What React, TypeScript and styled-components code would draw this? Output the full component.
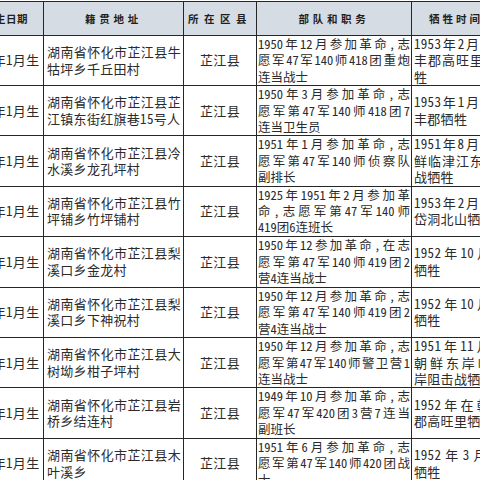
import styled, { createGlobalStyle } from 'styled-components';

type Row = {
  h: number;
  born: string;
  addr: string[];
  unit: string[];
  death: string[];
};

const rows: Row[] = [
  {
    h: 50,
    born: '1930年1月生',
    addr: ['湖南省怀化市芷江县牛', '牯坪乡千丘田村'],
    unit: ['1950年12月参加革命，志', '愿军47军140师418团重炮', '连当战士'],
    death: ['1953年2月在朝鲜金', '丰郡高旺里战斗中牺', '牲'],
  },
  {
    h: 49,
    born: '1931年1月生',
    addr: ['湖南省怀化市芷江县芷', '江镇东街红旗巷15号人'],
    unit: ['1950年3月参加革命，志', '愿军第47军140师418团7', '连当卫生员'],
    death: ['1953年1月在朝鲜金', '丰郡牺牲'],
  },
  {
    h: 49,
    born: '1930年1月生',
    addr: ['湖南省怀化市芷江县冷', '水溪乡龙孔坪村'],
    unit: ['1951年1月参加革命，志', '愿军第47军140师侦察队', '副排长'],
    death: ['1951年8月31日在朝', '鲜临津江东岸阻击作', '战牺牲'],
  },
  {
    h: 49,
    born: '1925年1月生',
    addr: ['湖南省怀化市芷江县竹', '坪铺乡竹坪铺村'],
    unit: ['1925年1951年2月参加革', '命，志愿军第47军140师', '419团6连班长'],
    death: ['1953年2月在朝鲜金', '岱洞北山牺牲'],
  },
  {
    h: 51,
    born: '1929年1月生',
    addr: ['湖南省怀化市芷江县梨', '溪口乡金龙村'],
    unit: ['1950年12参加革命，在志', '愿军第47军140师419团2', '营4连当战士'],
    death: ['1952年10月在朝鲜', '牺牲'],
  },
  {
    h: 49,
    born: '1931年1月生',
    addr: ['湖南省怀化市芷江县梨', '溪口乡下神祝村'],
    unit: ['1950年12月参加革命，志', '愿军第47军140师419团2', '营4连当战士'],
    death: ['1952年10月在朝鲜', '牺牲'],
  },
  {
    h: 49,
    born: '1932年1月生',
    addr: ['湖南省怀化市芷江县大', '树坳乡柑子坪村'],
    unit: ['1950年12月参加革命，志', '愿军第47军140师警卫营1', '连当战士'],
    death: ['1951年11月22日在', '朝鲜东岸临津江东', '岸阻击战牺牲'],
  },
  {
    h: 49,
    born: '1928年1月生',
    addr: ['湖南省怀化市芷江县岩', '桥乡结连村'],
    unit: ['1949年10月参加革命，志', '愿军47军420团3营7连当', '副班长'],
    death: ['1952年在朝鲜金丰', '郡高旺里牺牲'],
  },
  {
    h: 51,
    born: '1930年1月生',
    addr: ['湖南省怀化市芷江县木', '叶溪乡'],
    unit: ['1951年6月参加革命，志', '愿军第47军140师420团战', '士'],
    death: ['1952年3月在朝鲜', '牺牲'],
  },
];

// every line but the last is spread to the full cell width, as in the sheet
function Lines({ lines }: { lines: string[] }) {
  return (
    <>
      {lines.map((line, i) => (
        <Line key={i} $justify={i < lines.length - 1}>
          {line}
        </Line>
      ))}
    </>
  );
}

function App() {
  return (
    <Page>
      <GlobalStyle />
      <Table>
        <colgroup>
          <col style={{ width: 82 }} />
          <col style={{ width: 140 }} />
          <col style={{ width: 73 }} />
          <col style={{ width: 155 }} />
          <col style={{ width: 130 }} />
        </colgroup>
        <thead>
          <tr>
            <HeadCell $spacing={0.5} $align="right" $pad="0 15px 0 0">
              出生日期
            </HeadCell>
            <HeadCell $spacing={3.8}>籍贯地址</HeadCell>
            <HeadCell $spacing={5.5}>所在区县</HeadCell>
            <HeadCell $spacing={3.7}>部队和职务</HeadCell>
            <HeadCell $spacing={3} $align="left" $pad="0 0 0 17px">
              牺牲时间
            </HeadCell>
          </tr>
        </thead>
        <tbody>
          {rows.map((row, i) => (
            <tr key={i}>
              <Cell $h={row.h} $align="center">
                {row.born}
              </Cell>
              <Cell $h={row.h} $pad="0 2px 0 3px">
                <Lines lines={row.addr} />
              </Cell>
              <Cell $h={row.h} $align="center">
                芷江县
              </Cell>
              <Cell $h={row.h} $pad="0 1px" $tight>
                <Lines lines={row.unit} />
              </Cell>
              <Cell $h={row.h} $pad="0 2px">
                <Lines lines={row.death} />
              </Cell>
            </tr>
          ))}
        </tbody>
      </Table>
    </Page>
  );
}

const GlobalStyle = createGlobalStyle`
  html, body {
    margin: 0;
    padding: 0;
    background: #ffffff;
  }
`;

const Page = styled.div`
  width: 480px;
  height: 480px;
  overflow: hidden;
  padding-top: 1px;
  box-sizing: border-box;
  background: #ffffff;
`;

const Table = styled.table`
  border-collapse: collapse;
  table-layout: fixed;
  width: 580px;
  margin-left: -39px;
  font-family: 'Noto Sans CJK SC', 'Noto Sans', sans-serif;
  font-feature-settings: 'hwid';
  color: #2b2b2b;
`;

const HeadCell = styled.th<{ $spacing: number; $align?: string; $pad?: string }>`
  height: 33px;
  padding: ${(p) => p.$pad ?? '0'};
  border: 1px solid #262626;
  background: #d6dce4;
  color: #1f1f1f;
  font-size: 10.5px;
  font-weight: 700;
  letter-spacing: ${(p) => p.$spacing}px;
  text-align: ${(p) => p.$align ?? 'center'};
  white-space: nowrap;
  overflow: hidden;
`;

const Cell = styled.td<{ $h: number; $align?: string; $pad?: string; $tight?: boolean }>`
  height: ${(p) => p.$h - 1}px;
  padding: ${(p) => p.$pad ?? '0'};
  border: 1px solid #262626;
  vertical-align: middle;
  text-align: ${(p) => p.$align ?? 'left'};
  font-size: ${(p) => (p.$tight ? '12.5px' : '13px')};
  letter-spacing: ${(p) => (p.$tight ? '0' : '0.3px')};
  line-height: 16.4px;
  white-space: nowrap;
  overflow: hidden;
`;

const Line = styled.div<{ $justify: boolean }>`
  white-space: ${(p) => (p.$justify ? 'normal' : 'nowrap')};
  text-align: ${(p) => (p.$justify ? 'justify' : 'left')};
  text-align-last: ${(p) => (p.$justify ? 'justify' : 'left')};
`;

export default App;
